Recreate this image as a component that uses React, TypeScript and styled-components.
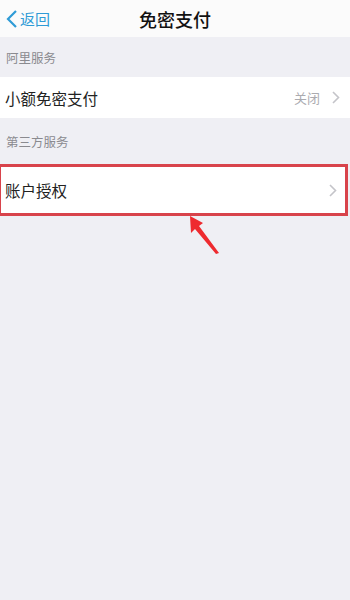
import styled, { createGlobalStyle } from "styled-components";

const GlobalStyle = createGlobalStyle`
  *, *::before, *::after {
    box-sizing: border-box;
  }
  html, body {
    margin: 0;
    padding: 0;
    background: #efeff4;
    font-family: "Noto Sans CJK SC", "Noto Sans", sans-serif;
  }
`;

const Page = styled.div`
  position: relative;
  width: 350px;
  min-height: 600px;
  background: #efeff4;
`;

const NavBar = styled.div`
  height: 37px;
  background: #fbfbfb;
  display: grid;
  grid-template-columns: 80px 1fr 80px;
  align-items: center;
`;

const BackButton = styled.div`
  display: flex;
  align-items: center;
  gap: 2px;
  padding-left: 6px;
  color: #2f9bd6;
  font-size: 15px;
`;

const Title = styled.div`
  text-align: center;
  font-size: 18px;
  font-weight: 500;
  color: #111;
`;

const SectionHeader = styled.div<{ $height: number }>`
  height: ${(p) => p.$height}px;
  display: flex;
  align-items: center;
  padding-left: 6px;
  font-size: 12.5px;
  color: #8a8a8f;
`;

const Row = styled.div<{ $highlight?: boolean; $height: number }>`
  height: ${(p) => p.$height}px;
  background: #fff;
  display: flex;
  align-items: center;
  justify-content: space-between;
  padding: 0 10px 0 5px;
  font-size: 15.5px;
  color: #222;
  ${(p) =>
    p.$highlight
      ? `
    margin-top: 3px;
    outline: 3px solid #d8434b;
    width: 344px;
    margin-left: 1px;
    padding-left: 4px;
    padding-right: 8px;
  `
      : ""}
`;

const RowRight = styled.div`
  display: flex;
  align-items: center;
  gap: 12px;
  font-size: 13px;
  color: #ababb0;
`;

const Arrow = styled.svg`
  position: absolute;
  left: 180px;
  top: 210px;
`;

const Chevron = () => (
  <svg width="8" height="13" viewBox="0 0 8 13">
    <path d="M1 1 L6.5 6.5 L1 12" fill="none" stroke="#c4c4c9" strokeWidth="1.6" />
  </svg>
);

export default function App() {
  return (
    <Page>
      <GlobalStyle />
      <NavBar>
        <BackButton>
          <svg width="12" height="18" viewBox="0 0 12 18">
            <path d="M10 1 L2 9 L10 17" fill="none" stroke="#2f9bd6" strokeWidth="2.2" />
          </svg>
          返回
        </BackButton>
        <Title>免密支付</Title>
        <div />
      </NavBar>
      <SectionHeader $height={40}>阿里服务</SectionHeader>
      <Row $height={41}>
        <span>小额免密支付</span>
        <RowRight>
          关闭
          <Chevron />
        </RowRight>
      </Row>
      <SectionHeader $height={46}>第三方服务</SectionHeader>
      <Row $height={46} $highlight>
        <span>账户授权</span>
        <Chevron />
      </Row>
      <Arrow width="50" height="50" viewBox="0 0 50 50">
        <path d="M10 6 L23 13 L19 16 L39 43 L36 44 L15 19 L11 23 Z" fill="#ee2a2f" />
      </Arrow>
    </Page>
  );
}
